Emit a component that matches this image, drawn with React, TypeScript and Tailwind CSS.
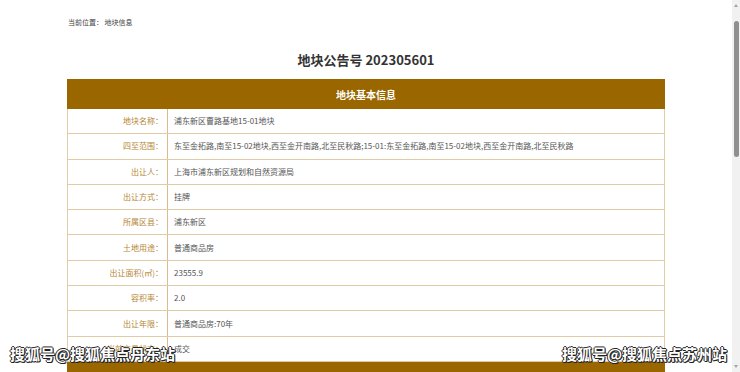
const rows: { label: string; value: string }[] = [
  { label: "地块名称：", value: "浦东新区曹路基地15-01地块" },
  {
    label: "四至范围：",
    value:
      "东至金拓路,南至15-02地块,西至金开南路,北至民秋路;15-01:东至金拓路,南至15-02地块,西至金开南路,北至民秋路",
  },
  { label: "出让人：", value: "上海市浦东新区规划和自然资源局" },
  { label: "出让方式：", value: "挂牌" },
  { label: "所属区县：", value: "浦东新区" },
  { label: "土地用途：", value: "普通商品房" },
  { label: "出让面积(㎡)：", value: "23555.9" },
  { label: "容积率：", value: "2.0" },
  { label: "出让年限：", value: "普通商品房:70年" },
  { label: "当前交易状态：", value: "成交" },
];

const font = "font-['Noto_Sans_CJK_SC','Noto_Sans',sans-serif]";

export default function App() {
  return (
    <div className={`relative flex h-[372px] w-[740px] overflow-hidden bg-white ${font}`}>
      {/* Page */}
      <div className="flex min-w-0 flex-1 flex-col">
        <div className="mt-[1px] h-[4px] bg-[#996600]" />

        {/* Breadcrumb */}
        <div className="pl-[68px] pt-[16px] text-[7px] leading-[10px] text-[#444]">
          当前位置：&nbsp;地块信息
        </div>

        {/* Title */}
        <h1 className="mt-[24px] text-center text-[13px] font-bold leading-[18px] text-[#333]">
          地块公告号 202305601
        </h1>

        {/* Table */}
        <div className="mx-[67px] mt-[10px] flex flex-col">
          <div className="flex h-[30px] items-center justify-center bg-[#996600] text-[10px] font-bold text-white">
            地块基本信息
          </div>
          <div className="border-x border-[#e3cda6]">
            {rows.map((r) => (
              <div
                key={r.label}
                className="flex h-[25.3px] border-b border-[#e2cba4] text-[8px] leading-none"
              >
                <div className="flex w-[100px] shrink-0 items-center justify-end border-r border-[#d9bb8c] pr-[4px] text-[#b58634]">
                  {r.label}
                </div>
                <div className="flex min-w-0 flex-1 items-center whitespace-nowrap pl-[6px] text-[#555]">
                  {r.value}
                </div>
              </div>
            ))}
          </div>
          <div className="h-[30px] bg-[#996600]" />
        </div>
      </div>

      {/* Scrollbar */}
      <div className="flex w-[8px] shrink-0 flex-col items-center bg-[#f1f1f1]">
        <div className="mt-[4px] h-0 w-0 border-x-[2.5px] border-b-[3px] border-x-transparent border-b-[#a3a3a3]" />
        <div className="mt-[14px] h-[136px] w-[5px] rounded-full bg-[#8f8f8f]" />
        <div className="mt-auto mb-[4px] h-0 w-0 border-x-[2.5px] border-t-[3px] border-x-transparent border-t-[#a3a3a3]" />
      </div>

      {/* Watermarks */}
      <div className="absolute left-[10px] top-[344px] text-[15px] font-bold leading-[20px] text-white [text-shadow:1px_1px_0_#222,-1px_0_0_#222,0_-1px_0_#222,1px_0_0_#222,0_1px_0_#222]">
        搜狐号@搜狐焦点丹东站
      </div>
      <div className="absolute left-[562px] top-[344px] text-[15px] font-bold leading-[20px] text-white [text-shadow:1px_1px_0_#222,-1px_0_0_#222,0_-1px_0_#222,1px_0_0_#222,0_1px_0_#222]">
        搜狐号@搜狐焦点苏州站
      </div>
    </div>
  );
}
